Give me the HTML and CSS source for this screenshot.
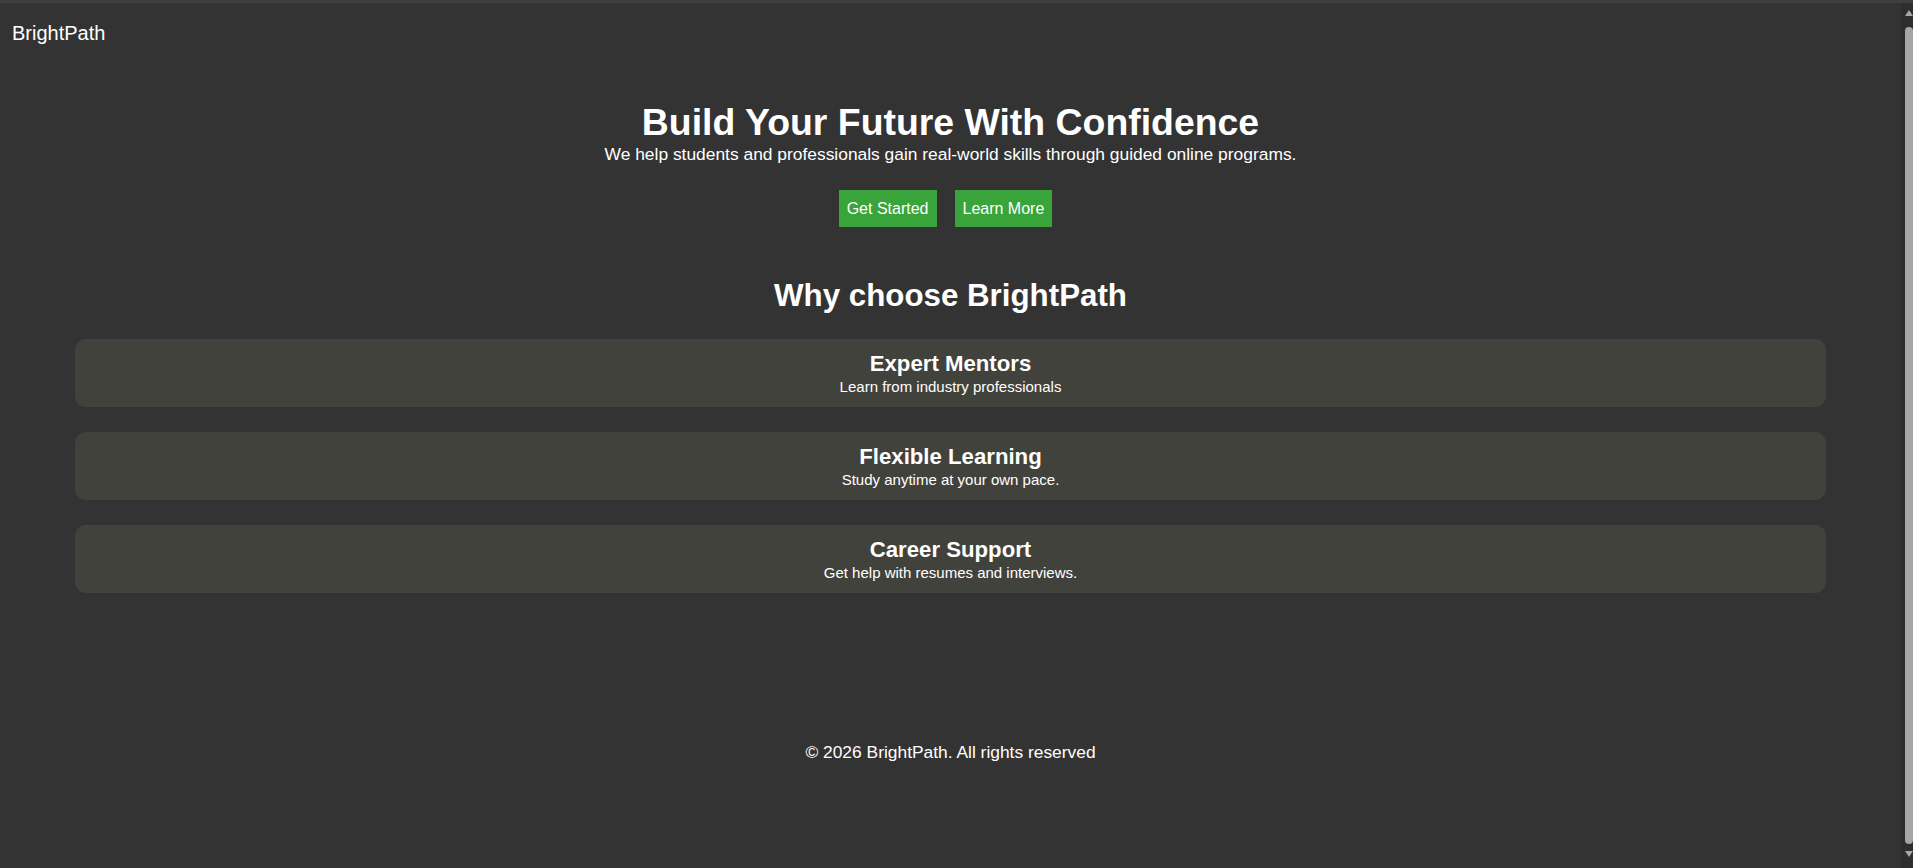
FILE: index.html
```html
<!DOCTYPE html>
<html lang="en">
<head>
<meta charset="utf-8">
<title>BrightPath</title>
<link rel="stylesheet" href="styles.css">
</head>
<body>
<header class="site-header">
  <div class="logo">BrightPath</div>
</header>
<main>
  <section class="hero">
    <h1 class="hero-title">Build Your Future With Confidence</h1>
    <p class="hero-text">We help students and professionals gain real-world skills through guided online programs.</p>
    <div class="hero-actions">
      <a class="btn" href="#">Get Started</a>
      <a class="btn" href="#">Learn More</a>
    </div>
  </section>
  <section class="features">
    <h2 class="features-title">Why choose BrightPath</h2>
    <div class="card">
      <h3 class="card-title">Expert Mentors</h3>
      <p class="card-text">Learn from industry professionals</p>
    </div>
    <div class="card">
      <h3 class="card-title">Flexible Learning</h3>
      <p class="card-text">Study anytime at your own pace.</p>
    </div>
    <div class="card">
      <h3 class="card-title">Career Support</h3>
      <p class="card-text">Get help with resumes and interviews.</p>
    </div>
  </section>
</main>
<footer class="site-footer">© 2026 BrightPath. All rights reserved</footer>
<div class="scrollbar" aria-hidden="true">
  <span class="sb-arrow sb-up"></span>
  <span class="sb-thumb"></span>
  <span class="sb-arrow sb-down"></span>
</div>
</body>
</html>
```
FILE: styles.css
```css
html {
  background: #333333;
  border-top: 3px solid #3f3f3f;
}

body {
  margin: 0 12px 0 0;
  font-family: "Liberation Sans", Arial, sans-serif;
  color: #ffffff;
}

.site-header {
  padding: 18.5px 12px 0;
}

.logo {
  font-size: 20px;
  line-height: 23px;
}

.hero {
  padding-top: 56.5px;
  text-align: center;
}

.hero-title {
  margin: 0;
  font-size: 37.4px;
  line-height: 42px;
  font-weight: bold;
}

.hero-text {
  margin: 1px 0 0;
  font-size: 17.4px;
  line-height: 20px;
}

.hero-actions {
  margin-top: 26px;
  display: flex;
  justify-content: center;
  gap: 8px;
}

.btn {
  margin-right: 10px;
  padding: 9.5px 8px;
  background: #38a43a;
  color: #ffffff;
  font-size: 16px;
  line-height: 18px;
  text-decoration: none;
}

.features {
  margin-top: 50.5px;
  text-align: center;
}

.features-title {
  margin: 0 0 25.5px;
  font-size: 31.3px;
  line-height: 36px;
  font-weight: bold;
}

.card {
  margin: 0 75px 25px;
  padding: 11.5px 20px 12.5px;
  background: #42423c;
  border-radius: 11px;
}

.card:last-child {
  margin-bottom: 0;
}

.card-title {
  margin: 0 0 2px;
  font-size: 22.2px;
  line-height: 25px;
  font-weight: bold;
}

.card-text {
  margin: 0;
  font-size: 15px;
  line-height: 17px;
}

.site-footer {
  margin-top: 149.3px;
  padding-bottom: 115.7px;
  text-align: center;
  font-size: 17.4px;
  line-height: 20px;
}

/* browser scrollbar drawn over the right edge of the viewport */
.scrollbar {
  position: fixed;
  top: 3px;
  right: 0;
  bottom: 0;
  width: 12px;
  box-sizing: border-box;
  padding: 7px 0 11px;
  background: #2e2e2e;
  display: flex;
  flex-direction: column;
  align-items: flex-end;
}

.sb-arrow {
  width: 0;
  height: 0;
  border-left: 4px solid transparent;
  border-right: 4px solid transparent;
}

.sb-up {
  border-bottom: 6px solid #a6a6a6;
}

.sb-down {
  margin-top: 7px;
  border-top: 6px solid #a6a6a6;
}

.sb-thumb {
  flex: 1;
  width: 8px;
  margin-top: 11px;
  background: #a6a6a6;
  border-radius: 4px;
}
```
